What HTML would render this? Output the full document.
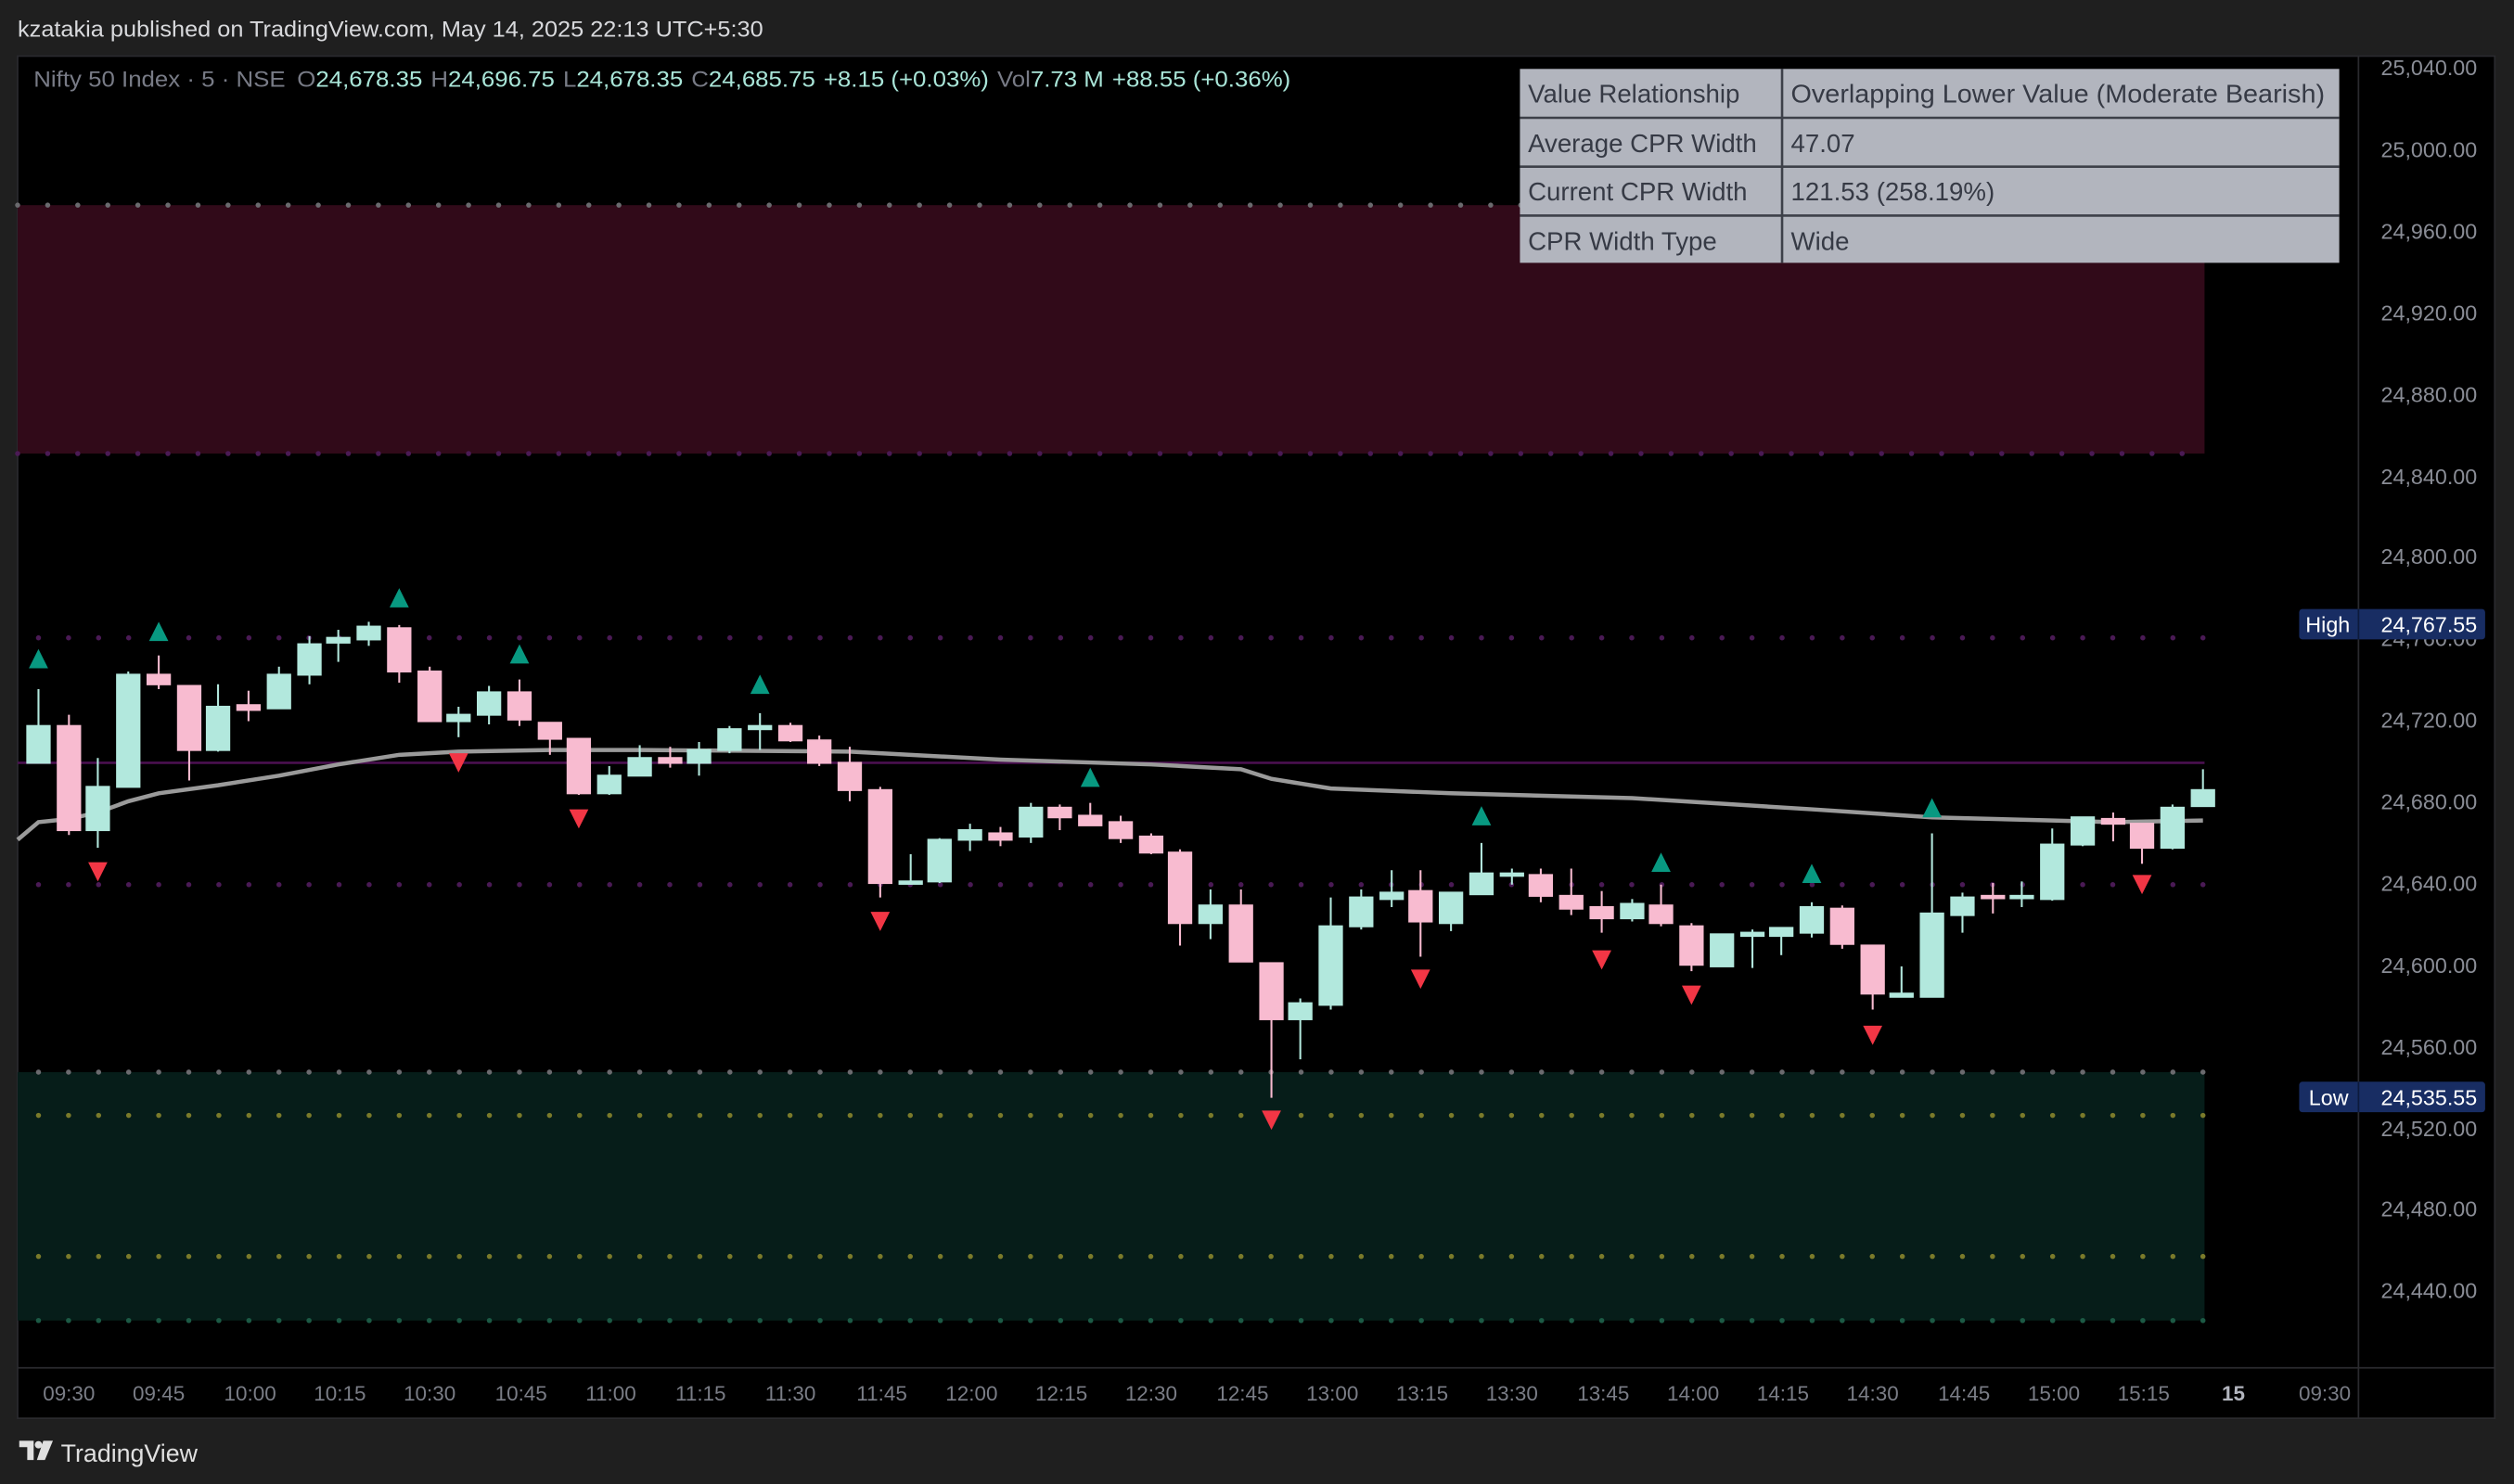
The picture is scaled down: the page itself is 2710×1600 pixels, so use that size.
<!DOCTYPE html>
<html><head><meta charset="utf-8"><style>
html,body{margin:0;padding:0;background:#1e1e1e;width:2710px;height:1600px;overflow:hidden}
svg{display:block}
text{font-family:"Liberation Sans",sans-serif}
</style></head><body>
<svg width="2710" height="1600" viewBox="0 0 1568 926" preserveAspectRatio="none" xmlns="http://www.w3.org/2000/svg">
<rect x="0" y="0" width="1568" height="926" fill="#1f1f1f"/>
<text x="11" y="23" font-size="14" fill="#d8d9dc" textLength="465" lengthAdjust="spacingAndGlyphs">kzatakia published on TradingView.com, May 14, 2025 22:13 UTC+5:30</text>
<rect x="11" y="35" width="1545" height="850" fill="#000"/>
<line x1="1471" y1="35" x2="1471" y2="885" stroke="#2a2a2e" stroke-width="1"/>
<line x1="11" y1="853.5" x2="1556" y2="853.5" stroke="#2a2a2e" stroke-width="1"/>
<rect x="11" y="35" width="1545" height="850" fill="none" stroke="#2a2a2e" stroke-width="1"/>
<!-- zones -->
<rect x="11" y="128" width="1364" height="155" fill="#310a19"/>
<rect x="11" y="669" width="1364" height="155" fill="#061d19"/>
<g stroke-linecap="round" stroke-width="3.2">
<line x1="11" y1="128" x2="1375" y2="128" stroke="#6a6a6e" stroke-dasharray="0 18.75"/>
<line x1="11" y1="283" x2="1375" y2="283" stroke="#4a1a55" stroke-dasharray="0 18.75"/>
<line x1="24" y1="398" x2="1375" y2="398" stroke="#4a1a55" stroke-dasharray="0 18.75"/>
<line x1="24" y1="552" x2="1375" y2="552" stroke="#4a1a55" stroke-dasharray="0 18.75"/>
<line x1="24" y1="669" x2="1375" y2="669" stroke="#6a6a6e" stroke-dasharray="0 18.75"/>
<line x1="24" y1="696" x2="1375" y2="696" stroke="#7a7a2a" stroke-dasharray="0 18.75"/>
<line x1="24" y1="784" x2="1375" y2="784" stroke="#7a7a2a" stroke-dasharray="0 18.75"/>
<line x1="24" y1="824" x2="1375" y2="824" stroke="#1c5a45" stroke-dasharray="0 18.75"/>
</g>
<line x1="11" y1="476" x2="1375" y2="476" stroke="#4a1050" stroke-width="1.5"/>
<polyline fill="none" stroke="#9a9a9a" stroke-width="2.6" points="11,524 24,513 43,511 61,507 80,500 99,495 136,490 174,484 211,477 249,471 286,469 343,468 400,468 530,469 624,474 718,477 774,480 793,486 830,492 905,495 1018,498 1130,505 1205,510 1280,512 1318,513 1374,512"/>
<!-- candles -->
<g stroke-width="1.2">
<g stroke="#b2e8dd" fill="#b2e8dd">
<line x1="24" y1="430" x2="24" y2="476"/><rect x="17" y="453" width="14" height="23"/>
<line x1="61" y1="473" x2="61" y2="529"/><rect x="54" y="491" width="14" height="27"/>
<line x1="80" y1="419" x2="80" y2="491"/><rect x="73" y="421" width="14" height="70"/>
<line x1="136" y1="427" x2="136" y2="469"/><rect x="129" y="441" width="14" height="27"/>
<line x1="174" y1="416" x2="174" y2="442"/><rect x="167" y="421" width="14" height="21"/>
<line x1="193" y1="397" x2="193" y2="427"/><rect x="186" y="402" width="14" height="19"/>
<line x1="211" y1="393" x2="211" y2="413"/><rect x="204" y="398" width="14" height="3"/>
<line x1="230" y1="388" x2="230" y2="403"/><rect x="223" y="391" width="14" height="8"/>
<line x1="286" y1="441" x2="286" y2="460"/><rect x="279" y="446" width="14" height="4"/>
<line x1="305" y1="428" x2="305" y2="452"/><rect x="298" y="432" width="14" height="14"/>
<line x1="380" y1="478" x2="380" y2="496"/><rect x="373" y="484" width="14" height="11"/>
<line x1="399" y1="465" x2="399" y2="484"/><rect x="392" y="473" width="14" height="11"/>
<line x1="436" y1="463" x2="436" y2="484"/><rect x="429" y="468" width="14" height="8"/>
<line x1="455" y1="453" x2="455" y2="470"/><rect x="448" y="455" width="14" height="13"/>
<line x1="474" y1="445" x2="474" y2="468"/><rect x="467" y="453" width="14" height="2"/>
<line x1="568" y1="533" x2="568" y2="552"/><rect x="561" y="550" width="14" height="1.5"/>
<line x1="586" y1="523" x2="586" y2="551"/><rect x="579" y="524" width="14" height="26"/>
<line x1="605" y1="514" x2="605" y2="531"/><rect x="598" y="518" width="14" height="6"/>
<line x1="643" y1="501" x2="643" y2="526"/><rect x="636" y="504" width="14" height="18"/>
<line x1="755" y1="555" x2="755" y2="586"/><rect x="748" y="565" width="14" height="11"/>
<line x1="811" y1="623" x2="811" y2="661"/><rect x="804" y="626" width="14" height="10"/>
<line x1="830" y1="560" x2="830" y2="630"/><rect x="823" y="578" width="14" height="49"/>
<line x1="849" y1="555" x2="849" y2="580"/><rect x="842" y="560" width="14" height="18"/>
<line x1="868" y1="543" x2="868" y2="566"/><rect x="861" y="557" width="14" height="4"/>
<line x1="905" y1="557" x2="905" y2="581"/><rect x="898" y="557" width="14" height="19"/>
<line x1="924" y1="526" x2="924" y2="558"/><rect x="917" y="545" width="14" height="13"/>
<line x1="943" y1="542" x2="943" y2="552"/><rect x="936" y="545" width="14" height="1.5"/>
<line x1="1018" y1="561" x2="1018" y2="575"/><rect x="1011" y="564" width="14" height="9"/>
<line x1="1074" y1="583" x2="1074" y2="603"/><rect x="1067" y="583" width="14" height="20"/>
<line x1="1093" y1="580" x2="1093" y2="604"/><rect x="1086" y="582" width="14" height="2"/>
<line x1="1111" y1="579" x2="1111" y2="596"/><rect x="1104" y="579" width="14" height="5"/>
<line x1="1130" y1="563" x2="1130" y2="585"/><rect x="1123" y="566" width="14" height="16"/>
<line x1="1186" y1="603" x2="1186" y2="622"/><rect x="1179" y="620" width="14" height="2"/>
<line x1="1205" y1="520" x2="1205" y2="622"/><rect x="1198" y="570" width="14" height="52"/>
<line x1="1224" y1="557" x2="1224" y2="582"/><rect x="1217" y="560" width="14" height="11"/>
<line x1="1261" y1="550" x2="1261" y2="566"/><rect x="1254" y="559" width="14" height="1.5"/>
<line x1="1280" y1="517" x2="1280" y2="562"/><rect x="1273" y="527" width="14" height="34"/>
<line x1="1299" y1="510" x2="1299" y2="528"/><rect x="1292" y="510" width="14" height="17"/>
<line x1="1355" y1="502" x2="1355" y2="530"/><rect x="1348" y="504" width="14" height="25"/>
<line x1="1374" y1="480" x2="1374" y2="503"/><rect x="1367" y="493" width="14" height="10"/>
</g>
<g stroke="#f8bbd0" fill="#f8bbd0">
<line x1="43" y1="446" x2="43" y2="521"/><rect x="36" y="453" width="14" height="65"/>
<line x1="99" y1="409" x2="99" y2="430"/><rect x="92" y="421" width="14" height="6"/>
<line x1="118" y1="428" x2="118" y2="487"/><rect x="111" y="428" width="14" height="40"/>
<line x1="155" y1="431" x2="155" y2="450"/><rect x="148" y="440" width="14" height="3"/>
<line x1="249" y1="390" x2="249" y2="426"/><rect x="242" y="392" width="14" height="27"/>
<line x1="268" y1="416" x2="268" y2="450"/><rect x="261" y="419" width="14" height="31"/>
<line x1="324" y1="424" x2="324" y2="453"/><rect x="317" y="432" width="14" height="17"/>
<line x1="343" y1="451" x2="343" y2="471"/><rect x="336" y="451" width="14" height="10"/>
<line x1="361" y1="461" x2="361" y2="496"/><rect x="354" y="461" width="14" height="34"/>
<line x1="418" y1="466" x2="418" y2="479"/><rect x="411" y="473" width="14" height="3"/>
<line x1="493" y1="451" x2="493" y2="463"/><rect x="486" y="453" width="14" height="9"/>
<line x1="511" y1="459" x2="511" y2="478"/><rect x="504" y="462" width="14" height="14"/>
<line x1="530" y1="466" x2="530" y2="500"/><rect x="523" y="476" width="14" height="17"/>
<line x1="549" y1="491" x2="549" y2="560"/><rect x="542" y="493" width="14" height="58"/>
<line x1="624" y1="516" x2="624" y2="528"/><rect x="617" y="520" width="14" height="4"/>
<line x1="661" y1="502" x2="661" y2="518"/><rect x="654" y="504" width="14" height="6"/>
<line x1="680" y1="501" x2="680" y2="515"/><rect x="673" y="509" width="14" height="6"/>
<line x1="699" y1="509" x2="699" y2="526"/><rect x="692" y="513" width="14" height="10"/>
<line x1="718" y1="520" x2="718" y2="533"/><rect x="711" y="522" width="14" height="10"/>
<line x1="736" y1="530" x2="736" y2="590"/><rect x="729" y="532" width="14" height="44"/>
<line x1="774" y1="555" x2="774" y2="600"/><rect x="767" y="565" width="14" height="35"/>
<line x1="793" y1="601" x2="793" y2="685"/><rect x="786" y="601" width="14" height="35"/>
<line x1="886" y1="543" x2="886" y2="597"/><rect x="879" y="556" width="14" height="19"/>
<line x1="961" y1="542" x2="961" y2="563"/><rect x="954" y="546" width="14" height="13"/>
<line x1="980" y1="542" x2="980" y2="571"/><rect x="973" y="559" width="14" height="8"/>
<line x1="999" y1="556" x2="999" y2="582"/><rect x="992" y="566" width="14" height="7"/>
<line x1="1036" y1="552" x2="1036" y2="578"/><rect x="1029" y="565" width="14" height="11"/>
<line x1="1055" y1="576" x2="1055" y2="606"/><rect x="1048" y="578" width="14" height="24"/>
<line x1="1149" y1="565" x2="1149" y2="592"/><rect x="1142" y="567" width="14" height="22"/>
<line x1="1168" y1="590" x2="1168" y2="630"/><rect x="1161" y="590" width="14" height="30"/>
<line x1="1243" y1="551" x2="1243" y2="570"/><rect x="1236" y="559" width="14" height="1.5"/>
<line x1="1318" y1="507" x2="1318" y2="525"/><rect x="1311" y="511" width="14" height="3"/>
<line x1="1336" y1="514" x2="1336" y2="539"/><rect x="1329" y="514" width="14" height="15"/>
</g>
</g>
<!-- markers -->
<g fill="#089981">
<path d="M24 405l-6 12h12z"/><path d="M99 388l-6 12h12z"/><path d="M249 367l-6 12h12z"/><path d="M324 402l-6 12h12z"/><path d="M474 421l-6 12h12z"/><path d="M680 479l-6 12h12z"/><path d="M924 503l-6 12h12z"/><path d="M1036 532l-6 12h12z"/><path d="M1130 539l-6 12h12z"/><path d="M1205 498l-6 12h12z"/>
</g>
<g fill="#f23645">
<path d="M61 550l-6-12h12z"/><path d="M286 482l-6-12h12z"/><path d="M361 517l-6-12h12z"/><path d="M549 581l-6-12h12z"/><path d="M793 705l-6-12h12z"/><path d="M886 617l-6-12h12z"/><path d="M999 605l-6-12h12z"/><path d="M1055 627l-6-12h12z"/><path d="M1168 652l-6-12h12z"/><path d="M1336 558l-6-12h12z"/>
</g>
<!-- legend -->
<text x="21" y="54" font-size="14" fill="#787b86" textLength="784" lengthAdjust="spacingAndGlyphs">Nifty 50 Index · 5 · NSE <tspan dx="3">O</tspan><tspan fill="#a9e5d8">24,678.35</tspan> <tspan dx="1">H</tspan><tspan fill="#a9e5d8">24,696.75</tspan> <tspan dx="1">L</tspan><tspan fill="#a9e5d8">24,678.35</tspan> <tspan dx="1">C</tspan><tspan fill="#a9e5d8">24,685.75</tspan> <tspan dx="1" fill="#a9e5d8">+8.15 (+0.03%)</tspan> <tspan dx="1">Vol</tspan><tspan fill="#a9e5d8">7.73 M</tspan> <tspan dx="1" fill="#a9e5d8">+88.55 (+0.36%)</tspan></text>
<!-- table -->
<g font-size="16" fill="#363a45">
<rect x="948" y="43" width="511" height="121" fill="#b2b5be"/>
<g stroke="#3d4049" stroke-width="1.5"><line x1="948" y1="73.5" x2="1459" y2="73.5"/><line x1="948" y1="104" x2="1459" y2="104"/><line x1="948" y1="134.5" x2="1459" y2="134.5"/><line x1="1111.5" y1="43" x2="1111.5" y2="164"/></g>
<text x="953" y="64">Value Relationship</text><text x="1117" y="64" textLength="333" lengthAdjust="spacingAndGlyphs">Overlapping Lower Value (Moderate Bearish)</text>
<text x="953" y="95">Average CPR Width</text><text x="1117" y="95">47.07</text>
<text x="953" y="125">Current CPR Width</text><text x="1117" y="125">121.53 (258.19%)</text>
<text x="953" y="156">CPR Width Type</text><text x="1117" y="156">Wide</text>
</g>
<!-- price axis -->
<g font-size="13.5" fill="#8a8d96" text-anchor="end">
<text x="1545" y="47">25,040.00</text><text x="1545" y="98">25,000.00</text><text x="1545" y="149">24,960.00</text><text x="1545" y="200">24,920.00</text><text x="1545" y="251">24,880.00</text><text x="1545" y="302">24,840.00</text><text x="1545" y="352">24,800.00</text><text x="1545" y="403">24,760.00</text><text x="1545" y="454">24,720.00</text><text x="1545" y="505">24,680.00</text><text x="1545" y="556">24,640.00</text><text x="1545" y="607">24,600.00</text><text x="1545" y="658">24,560.00</text><text x="1545" y="709">24,520.00</text><text x="1545" y="759">24,480.00</text><text x="1545" y="810">24,440.00</text>
</g>
<rect x="1434" y="380" width="116" height="19" rx="2" fill="#182d63"/>
<line x1="1471" y1="380" x2="1471" y2="399" stroke="#0d1a3c"/>
<text x="1438" y="394.5" font-size="13.5" fill="#fff">High</text><text x="1545" y="394.5" font-size="13.5" fill="#fff" text-anchor="end">24,767.55</text>
<rect x="1434" y="675" width="116" height="19" rx="2" fill="#182d63"/>
<line x1="1471" y1="675" x2="1471" y2="694" stroke="#0d1a3c"/>
<text x="1440" y="689.5" font-size="13.5" fill="#fff">Low</text><text x="1545" y="689.5" font-size="13.5" fill="#fff" text-anchor="end">24,535.55</text>
<!-- time axis -->
<g font-size="13" fill="#7a7d86" text-anchor="middle">
<text x="43" y="874">09:30</text><text x="99" y="874">09:45</text><text x="156" y="874">10:00</text><text x="212" y="874">10:15</text><text x="268" y="874">10:30</text><text x="325" y="874">10:45</text><text x="381" y="874">11:00</text><text x="437" y="874">11:15</text><text x="493" y="874">11:30</text><text x="550" y="874">11:45</text><text x="606" y="874">12:00</text><text x="662" y="874">12:15</text><text x="718" y="874">12:30</text><text x="775" y="874">12:45</text><text x="831" y="874">13:00</text><text x="887" y="874">13:15</text><text x="943" y="874">13:30</text><text x="1000" y="874">13:45</text><text x="1056" y="874">14:00</text><text x="1112" y="874">14:15</text><text x="1168" y="874">14:30</text><text x="1225" y="874">14:45</text><text x="1281" y="874">15:00</text><text x="1337" y="874">15:15</text><text x="1393" y="874" font-weight="bold" fill="#b2b5be">15</text><text x="1450" y="874">09:30</text>
</g>
<!-- logo -->
<g fill="#e0e0e0">
<path d="M12 899h9v12h-4v-8h-5z"/><circle cx="24" cy="901.5" r="2.3"/><path d="M27 899h6l-5 12h-5z"/>
</g>
<text x="38" y="912" font-size="15.5" fill="#e0e0e0">TradingView</text>
</svg>
</body></html>
